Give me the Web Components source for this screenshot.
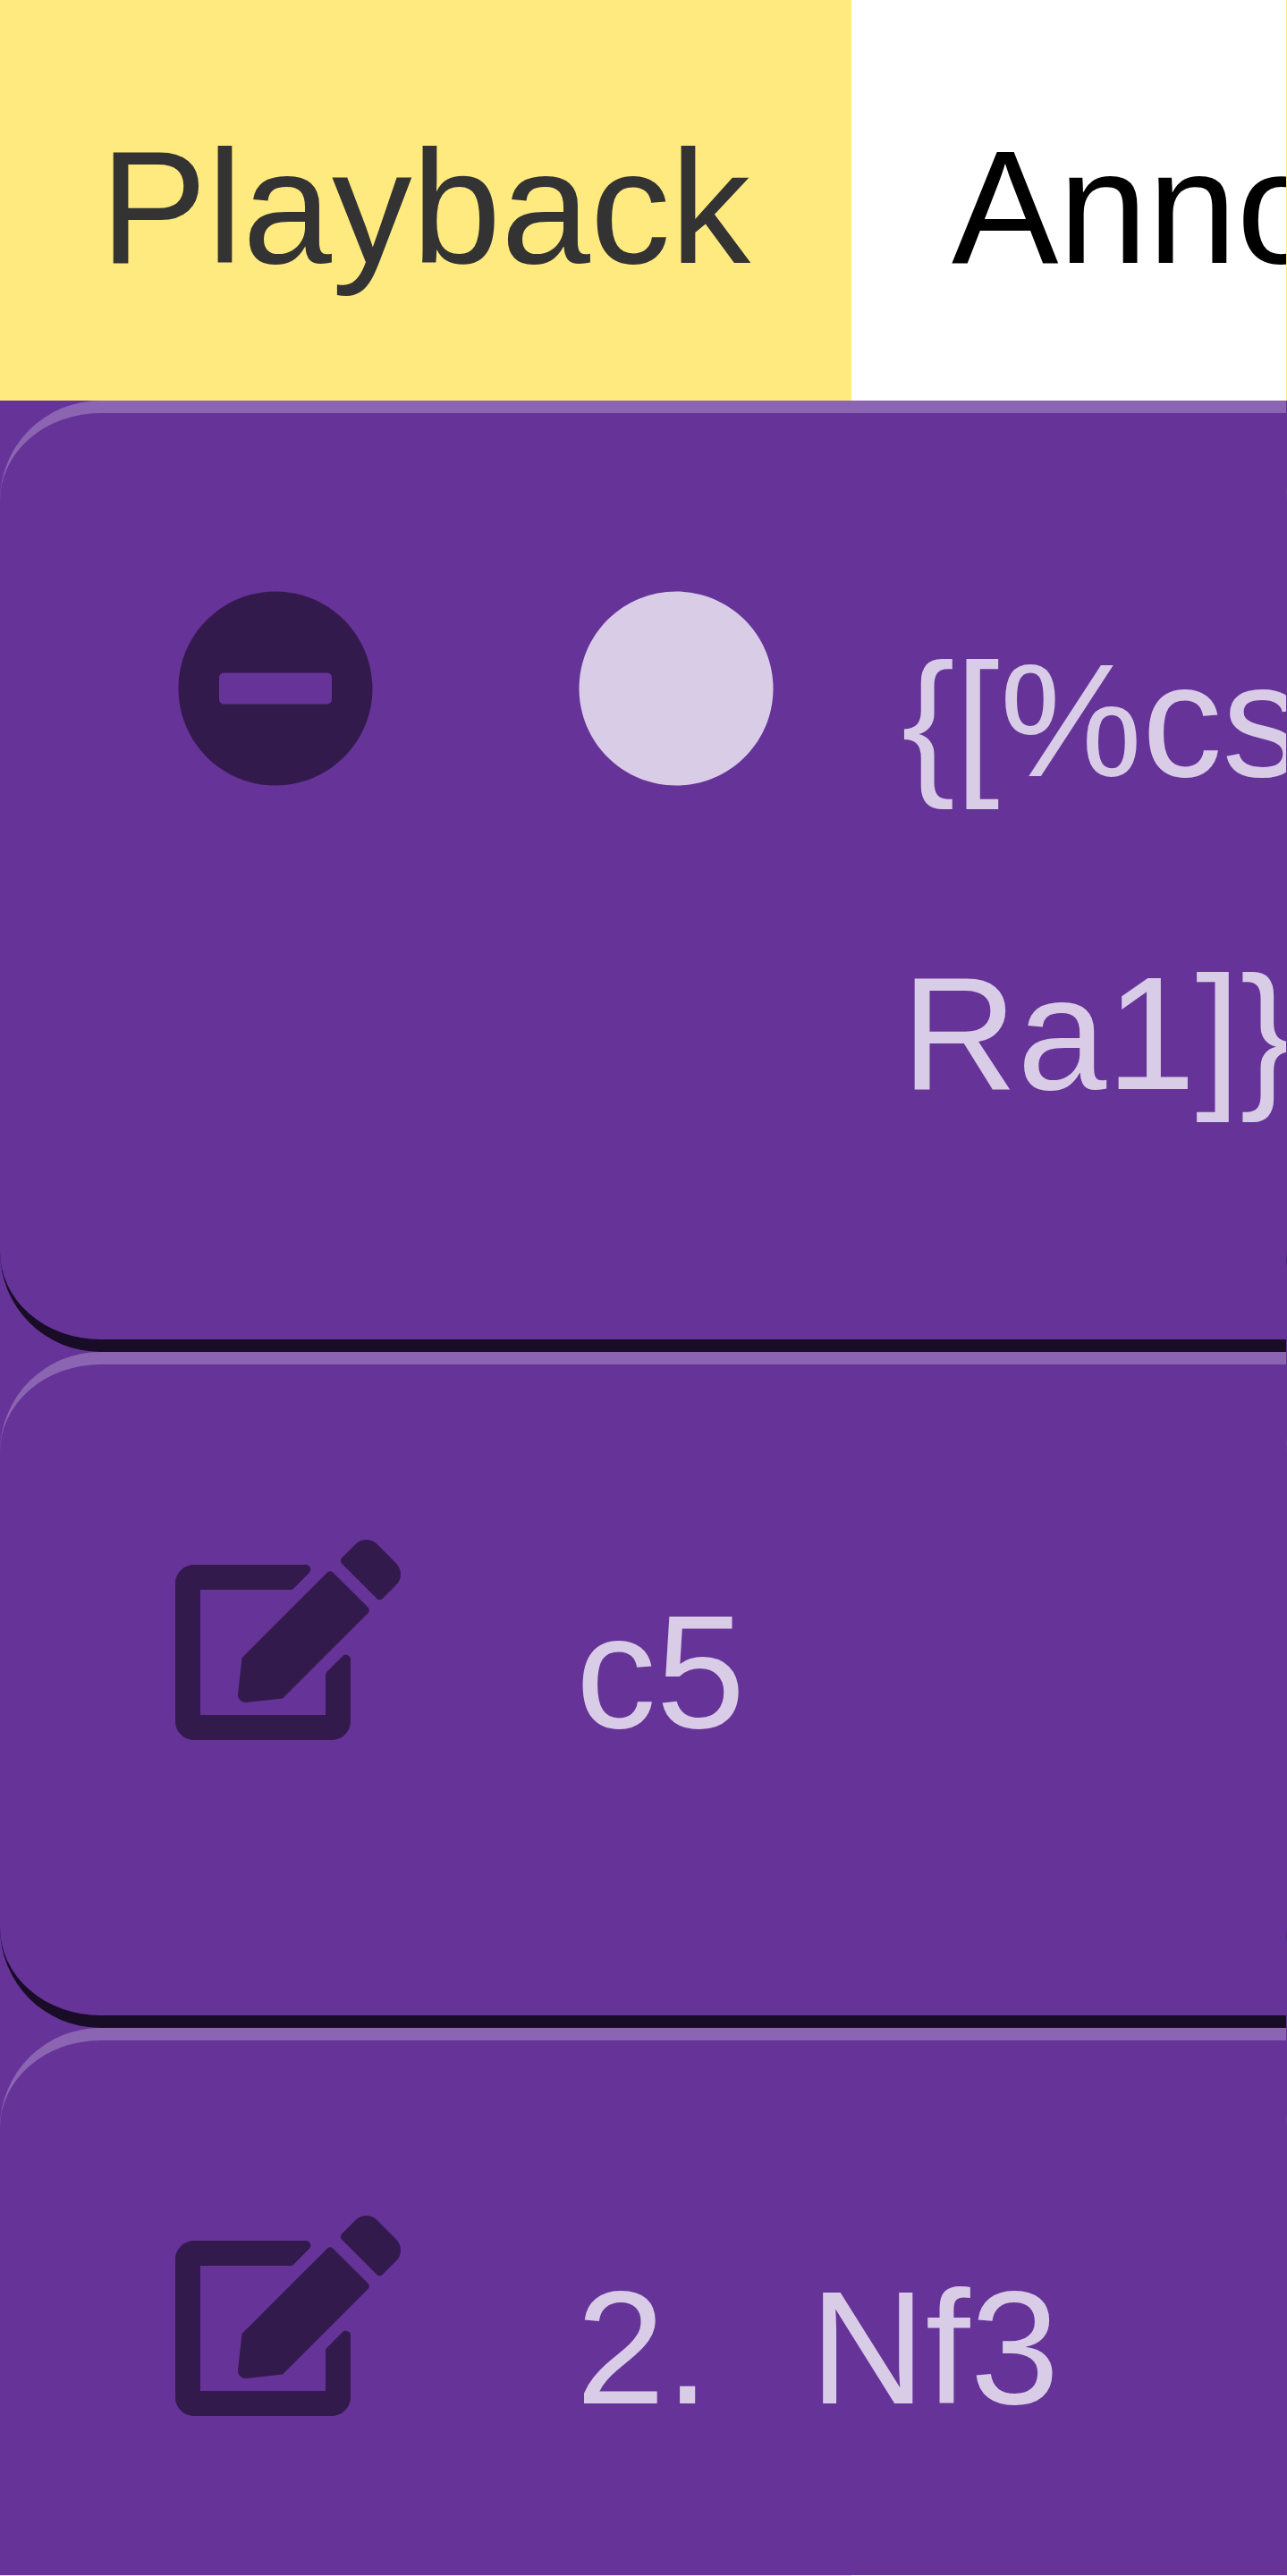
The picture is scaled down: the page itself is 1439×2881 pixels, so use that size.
<!DOCTYPE html>
<html lang="en">
<head>
<meta charset="utf-8">
<title>Playback</title>
<style>
html, body { margin: 0; height: 2881px; overflow: hidden; background: #ffea80; }
body { font: 179.2px "Liberation Sans", Arial, sans-serif; width: 1439px; }
</style>
</head>
<body>
<move-app></move-app>
<script>
const define = (name, html) => customElements.define(name, class extends HTMLElement {
  constructor() {
    super();
    this.attachShadow({ mode: 'open' }).innerHTML = html;
  }
});

define('tab-item', `
<style>
:host { display: block; box-sizing: border-box; flex: none; height: 448px; padding: 16px 112px 0; line-height: 432px; white-space: nowrap; background: #fff; color: #000; }
:host([active]) { width: 952px; background: #ffea80; color: #333; }
</style><slot></slot>`);

define('tab-bar', `
<style>
:host { display: flex; flex: none; height: 448px; overflow: hidden; background: #fff; }
</style><slot></slot>`);

define('move-row', `
<style>
:host { display: flex; flex: none; align-items: flex-start; box-sizing: border-box; width: 2016px; height: 756px; padding: 169px 196px 167px; border: 0 solid; border-width: 14px 0; border-color: rgba(255,255,255,.25) transparent rgba(0,0,0,.75); border-radius: 112px; line-height: 350px; color: #d9cce6; white-space: nowrap; }
:host([tall]) { height: 1064px; }
.action { flex: none; width: 448px; height: 252px; padding-top: 27px; box-sizing: border-box; color: #331a4d; line-height: 0; }
.content { display: flex; flex: none; gap: 112px; }
</style>
<div class="action"><slot name="action"></slot></div>
<div class="content"><slot></slot></div>`);

define('edit-icon', `
<style>:host { display: block; width: 252px; height: 224px; } svg { display: block; width: 100%; height: 100%; }</style>
<svg viewBox="0 0 576 512" fill="currentColor"><path d="M402.6 83.2l90.2 90.2c3.8 3.8 3.8 10 0 13.8L274.4 405.6l-92.8 10.3c-12.4 1.4-22.9-9.1-21.5-21.5l10.3-92.8L388.8 83.2c3.8-3.8 10-3.8 13.8 0zm162-22.9l-48.8-48.8c-15.2-15.2-39.9-15.2-55.2 0l-35.4 35.4c-3.8 3.8-3.8 10 0 13.8l90.2 90.2c3.8 3.8 10 3.8 13.8 0l35.4-35.4c15.2-15.3 15.2-40 0-55.2zM384 346.2V448H64V128h229.8c3.2 0 6.2-1.3 8.5-3.5l40-40c7.6-7.6 2.2-20.5-8.5-20.5H48C21.5 64 0 85.5 0 112v352c0 26.5 21.5 48 48 48h352c26.5 0 48-21.5 48-48V306.2c0-10.7-12.9-16-20.5-8.5l-40 40c-2.2 2.3-3.5 5.3-3.5 8.5z"/></svg>`);

define('minus-icon', `
<style>:host { display: block; width: 224px; height: 224px; } svg { display: block; width: 100%; height: 100%; }</style>
<svg viewBox="0 0 512 512" fill="currentColor"><path fill-rule="evenodd" d="M256 8C119 8 8 119 8 256s111 248 248 248 248-111 248-248S393 8 256 8zM124 296c-6.6 0-12-5.4-12-12v-56c0-6.6 5.4-12 12-12h264c6.6 0 12 5.4 12 12v56c0 6.6-5.4 12-12 12H124z"/></svg>`);

define('dot-icon', `
<style>:host { display: block; flex: none; width: 224px; height: 224px; margin: 27px 28px 0 0; } svg { display: block; width: 100%; height: 100%; }</style>
<svg viewBox="0 0 512 512" fill="currentColor"><path d="M256 8C119 8 8 119 8 256s111 248 248 248 248-111 248-248S393 8 256 8z"/></svg>`);

define('move-panel', `
<style>
:host { display: flex; flex-direction: column; min-width: 0; height: 100%; overflow: hidden; background: #639; }
</style><slot></slot>`);

define('move-app', `
<style>
:host { display: grid; grid-template-columns: 1438px 1px; grid-template-rows: 2880px 1px; width: 1439px; height: 2881px; overflow: hidden; }
.next { background: linear-gradient(90deg, #ffea80 952px, #fff 952px); }
</style>
<move-panel>
  <tab-bar><tab-item active>Playback</tab-item><tab-item>Anno</tab-item></tab-bar>
  <move-row tall>
    <minus-icon slot="action"></minus-icon>
    <dot-icon></dot-icon>
    <span>{[%cs<br>Ra1]}</span>
  </move-row>
  <move-row><edit-icon slot="action"></edit-icon><span>c5</span></move-row>
  <move-row><edit-icon slot="action"></edit-icon><span>2.</span><span>Nf3</span></move-row>
</move-panel>
<move-panel>
  <tab-bar><tab-item active></tab-item></tab-bar>
  <move-row tall></move-row>
  <move-row></move-row>
  <move-row></move-row>
</move-panel>
<div class="next"></div>`);
</script>
</body>
</html>
